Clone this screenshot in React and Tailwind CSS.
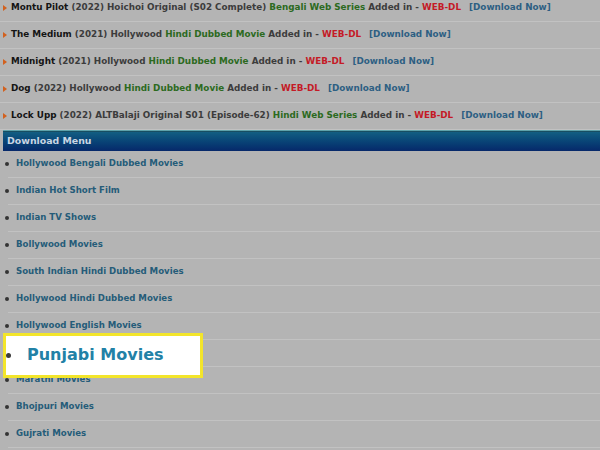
import React from "react";

const latest = [
  { title: "Montu Pilot", info: "(2022) Hoichoi Original (S02 Complete)", tag: "Bengali Web Series" },
  { title: "The Medium", info: "(2021) Hollywood", tag: "Hindi Dubbed Movie" },
  { title: "Midnight", info: "(2021) Hollywood", tag: "Hindi Dubbed Movie" },
  { title: "Dog", info: "(2022) Hollywood", tag: "Hindi Dubbed Movie" },
  { title: "Lock Upp", info: "(2022) ALTBalaji Original S01 (Episode-62)", tag: "Hindi Web Series" },
];

const menu = [
  "Hollywood Bengali Dubbed Movies",
  "Indian Hot Short Film",
  "Indian TV Shows",
  "Bollywood Movies",
  "South Indian Hindi Dubbed Movies",
  "Hollywood Hindi Dubbed Movies",
  "Hollywood English Movies",
  "Punjabi Movies",
  "Marathi Movies",
  "Bhojpuri Movies",
  "Gujrati Movies",
];

const Arrow = () => (
  <svg viewBox="0 0 4 6" className="w-[4px] h-[6px] shrink-0" aria-hidden>
    <path d="M0 0L4 3L0 6z" fill="#d2601e" />
  </svg>
);

export default function App() {
  return (
    <div className="w-[600px] h-[450px] overflow-hidden bg-[#b4b4b4] font-['DejaVu_Sans',Verdana,sans-serif] font-bold text-[8.8px]">
      <div className="-mt-[5.5px]">
        {latest.map((r) => (
          <div key={r.title} className="h-[27px] flex items-center gap-[4px] pl-[3px] border-b border-[#c2c2c2] whitespace-nowrap">
            <Arrow />
            <div>
              <span className="text-[#141414]">{r.title}</span>{" "}
              <span className="text-[#3c3c3c]">{r.info}</span>{" "}
              <span className="text-[#2c6a1e]">{r.tag}</span>{" "}
              <span className="text-[#3c3c3c]">Added in - </span>
              <span className="text-[#c41a26]">WEB-DL</span>
              <span className="ml-[8px] text-[#2d5f83]">[Download Now]</span>
            </div>
          </div>
        ))}
      </div>

      <div className="ml-[3px] border-t border-[#5fa2aa]">
        <div className="h-[20px] flex items-center pl-[4px] border-t border-[#184e62] bg-gradient-to-b from-[#135e82] to-[#07286a] text-[9.4px] text-[#c9d6e4]">
          Download Menu
        </div>
      </div>

      <div className="relative">
        {menu.map((m) => (
          <div key={m} className="h-[27px] flex items-center border-b border-[#c2c2c2] ml-[8px]">
            <span className="w-[4px] h-[4px] rounded-full bg-[#333] -ml-[3px] mr-[7px]" />
            <span className={m === "Punjabi Movies" ? "invisible text-[8.6px]" : "text-[#255c79] text-[8.6px]"}>{m}</span>
          </div>
        ))}

        <div className="absolute left-[3px] top-[182px] w-[200px] h-[45px] bg-white border-[3px] border-[#f3e52a] flex items-center">
          <span className="w-[5px] h-[5px] rounded-full bg-[#3a3a3a]" />
          <span className="ml-[16px] text-[16px] text-[#2281a6]">Punjabi Movies</span>
        </div>
      </div>
    </div>
  );
}
